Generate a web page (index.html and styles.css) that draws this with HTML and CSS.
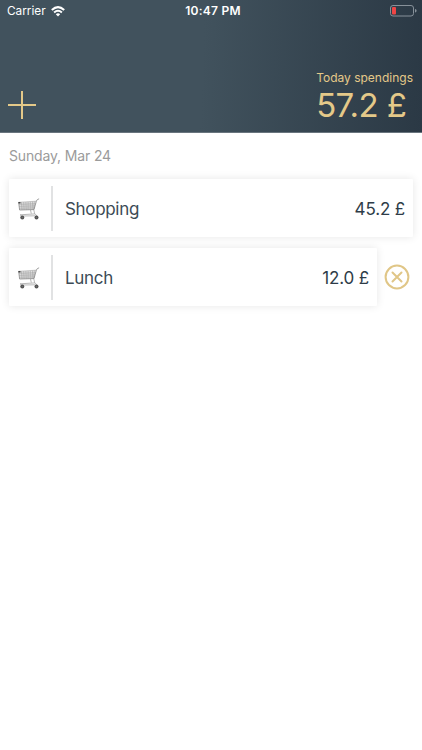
FILE: index.html
```html
<!DOCTYPE html>
<html lang="en">
<head>
<meta charset="utf-8">
<title>Spendings</title>
<link rel="stylesheet" href="styles.css">
</head>
<body>
<svg class="defs" width="0" height="0" aria-hidden="true">
  <symbol id="cart" viewBox="0 0 22 22">
    <path d="M1 4.5 18 3.2 16 11.5 1.8 12z" fill="#e2e2e2"/>
    <path d="M.5 4.3 18 3.2M1 6.3l16.5-.5M1.2 8.3l15.8-.4M1.5 10.2l15-.3M3.5 4.2l.5 7.7M5.7 4.1l.4 7.8M7.9 4l.3 7.8M10.1 3.9v7.8M12.3 3.8l-.1 7.8M14.5 3.6l-.4 8M16.3 3.5l-.6 8" fill="none" stroke="#8d8d8d" stroke-width=".45"/>
    <path d="M.7 4.4 1.6 12l14.4-.4L18.4 3q.5-1.6 2.7-2.2" fill="none" stroke="#777" stroke-width=".7"/>
    <path d="M15.8 11.7l.7 3.6 2.7 2.9M12.5 12l.8 3.6M2 16.8l15-.9M2 16.8l2 1.4M4 18l13.5-.2" fill="none" stroke="#999" stroke-width=".7"/>
    <path d="M.3 4h2.2v1.6H.5z" fill="#444"/>
    <circle cx="4.3" cy="19.5" r="2" fill="#555"/><circle cx="18.5" cy="19.4" r="2" fill="#555"/>
    <circle cx="4.3" cy="19.5" r=".5" fill="#777"/><circle cx="18.5" cy="19.4" r=".5" fill="#777"/>
  </symbol>
</svg>
<header class="header">
  <div class="status">
    <div class="carrier"><span>Carrier</span>
      <svg class="wifi" width="14" height="11" viewBox="0 0 14 11"><g fill="none" stroke="#fff" stroke-width="2"><path d="M.8 4Q7-1.8 13.2 4"/><path d="M3.1 6.5Q7 3 10.9 6.5"/></g><path d="M4.8 8.2Q7 6.4 9.2 8.2L7 10.5z" fill="#fff"/></svg>
    </div>
    <div class="clock">10:47 PM</div>
    <svg class="battery" width="27" height="12" viewBox="0 0 27 12"><rect x=".5" y=".5" width="23" height="10.5" rx="2.5" fill="none" stroke="#87919a"/><rect x="2" y="2" width="4" height="7.5" rx="1" fill="#ef4545"/><path d="M25 4q1.6.2 1.6 1.8T25 7.6z" fill="#87919a"/></svg>
  </div>
  <div class="summary">
    <svg class="add" width="28" height="28" viewBox="0 0 28 28"><path d="M14 0v28M0 14h28" stroke="#e4c989" stroke-width="2"/></svg>
    <div class="total">
      <div class="total-label">Today spendings</div>
      <div class="total-value">57.2 £</div>
    </div>
  </div>
</header>
<main class="list">
  <div class="date">Sunday, Mar 24</div>
  <div class="row">
    <div class="card">
      <svg class="cart" width="22" height="22"><use href="#cart"/></svg>
      <span class="divider"></span>
      <span class="name">Shopping</span>
      <span class="amount">45.2 £</span>
    </div>
  </div>
  <div class="row">
    <div class="card">
      <svg class="cart" width="22" height="22"><use href="#cart"/></svg>
      <span class="divider"></span>
      <span class="name">Lunch</span>
      <span class="amount">12.0 £</span>
    </div>
    <svg class="remove" width="26" height="26" viewBox="0 0 26 26"><g fill="none" stroke="#e0c687" stroke-width="2"><circle cx="13" cy="13" r="11.4"/><path d="m8.5 8.5 9 9m0-9-9 9" stroke-linecap="round"/></g></svg>
  </div>
</main>
</body>
</html>
```
FILE: styles.css
```css
* { box-sizing: border-box; }

body {
  margin: 0;
  min-height: 750px;
  background: #fff;
  font-family: Inter, "Liberation Sans", sans-serif;
  color: #3c4b56;
}

.defs { display: block; }

.header {
  height: 133px;
  display: flex;
  flex-direction: column;
  justify-content: space-between;
  background: linear-gradient(92deg, #41525d 0%, #41525d 48%, #2b3945 100%);
  border-bottom: 1px solid #69757e;
}

.status {
  height: 22px;
  display: grid;
  grid-template-columns: 1fr auto 1fr;
  align-items: center;
  padding: 0 5px 0 7px;
  color: #fff;
  font-size: 12px;
  line-height: 22px;
}

.carrier { display: flex; align-items: center; gap: 5px; font-size: 11.8px; }
.clock { padding-left: 2px; font-weight: 600; letter-spacing: .25px; }
.battery { justify-self: end; }

.summary {
  display: flex;
  justify-content: space-between;
  align-items: flex-end;
  padding: 0 9px 13px 8px;
  color: #e4c989;
}

.total { margin-bottom: -6px; }
.total-label { font-size: 12px; line-height: 15px; }
.total-value { font-size: 33px; line-height: 40px; letter-spacing: -.6px; }

.list { padding: 15px 9px 0; }

.date {
  margin-bottom: 15px;
  font-size: 14px;
  line-height: 16px;
  letter-spacing: -.15px;
  color: #9b9b9b;
}

.row { display: flex; align-items: center; margin-bottom: 11px; }

.card {
  flex: 1;
  height: 58px;
  display: flex;
  align-items: center;
  padding: 0 8px 0 9px;
  background: #fff;
  border-radius: 1px;
  box-shadow: 0 0 8px rgba(0, 0, 0, .1);
}

.cart { margin-top: 1px; }
.divider { width: 2px; height: 45px; margin: 0 12px 0 11px; background: #e1e2e3; }
.name { flex: 1; padding-top: 2px; font-size: 17px; letter-spacing: -.32px; }
.amount { padding-top: 2px; font-size: 17px; letter-spacing: -.15px; color: #2e3c48; }
.remove { margin: 0 3px 0 7px; }
```
